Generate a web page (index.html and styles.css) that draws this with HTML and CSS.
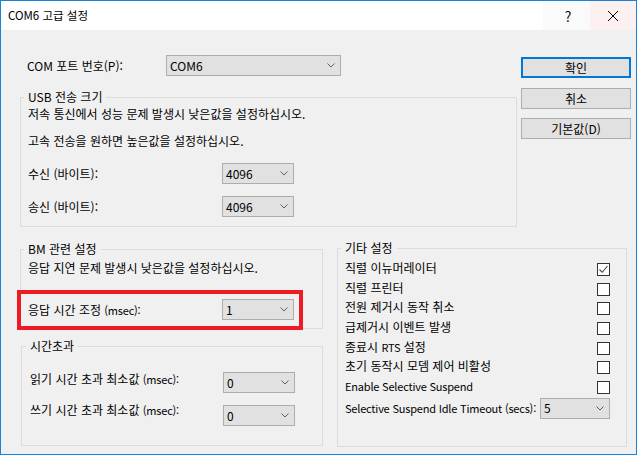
FILE: index.html
```html
<!DOCTYPE html>
<html lang="ko">
<head>
    <meta charset="UTF-8">
    <title>COM6 고급 설정</title>
    <link rel="stylesheet" href="styles.css">
</head>
<body>
    <div class="dialog">
        <div class="titlebar">
            <span class="title">COM6 고급 설정</span>
            <span class="tb-btn help">?</span>
            <span class="tb-btn close">
                <svg width="12" height="12" viewBox="0 0 12 12"><path d="M1 1 L11 11 M11 1 L1 11" stroke="#000" stroke-width="1" fill="none"/></svg>
            </span>
        </div>

        <div class="client">
            <div class="top">
                <div class="main">
                    <div class="row com-row">
                        <span class="label com-label">COM 포트 번호(P):</span>
                        <div class="combo combo-com"><span>COM6</span><svg class="chev" width="8" height="5" viewBox="0 0 8 5"><path d="M0.5 0.5 L4 4 L7.5 0.5" stroke="#606060" fill="none"/></svg></div>
                    </div>

                    <fieldset class="group usb">
                        <legend>USB 전송 크기</legend>
                        <p class="note first">저속 통신에서 성능 문제 발생시 낮은값을 설정하십시오.</p>
                        <p class="note second">고속 전송을 원하면 높은값을 설정하십시오.</p>
                        <div class="row r-recv">
                            <span class="label w194">수신 (바이트):</span>
                            <div class="combo combo-sm"><span>4096</span><svg class="chev" width="8" height="5" viewBox="0 0 8 5"><path d="M0.5 0.5 L4 4 L7.5 0.5" stroke="#606060" fill="none"/></svg></div>
                        </div>
                        <div class="row r-send">
                            <span class="label w194">송신 (바이트):</span>
                            <div class="combo combo-sm"><span>4096</span><svg class="chev" width="8" height="5" viewBox="0 0 8 5"><path d="M0.5 0.5 L4 4 L7.5 0.5" stroke="#606060" fill="none"/></svg></div>
                        </div>
                    </fieldset>
                </div>

                <div class="buttons">
                    <div class="btn default">확인</div>
                    <div class="btn">취소</div>
                    <div class="btn">기본값(D)</div>
                </div>
            </div>

            <div class="bottom">
                <div class="left-col">
                    <fieldset class="group bm">
                        <legend>BM 관련 설정</legend>
                        <p class="note">응답 지연 문제 발생시 낮은값을 설정하십시오.</p>
                        <div class="row r-latency">
                            <span class="label w194">응답 시간 조정 <span class="en">(msec):</span></span>
                            <div class="combo combo-sm"><span>1</span><svg class="chev" width="8" height="5" viewBox="0 0 8 5"><path d="M0.5 0.5 L4 4 L7.5 0.5" stroke="#606060" fill="none"/></svg></div>
                            <div class="highlight"></div>
                        </div>
                    </fieldset>

                    <fieldset class="group timeout">
                        <legend>시간초과</legend>
                        <div class="row r-read">
                            <span class="label w193">읽기 시간 초과 최소값 <span class="en">(msec):</span></span>
                            <div class="combo combo-sm"><span>0</span><svg class="chev" width="8" height="5" viewBox="0 0 8 5"><path d="M0.5 0.5 L4 4 L7.5 0.5" stroke="#606060" fill="none"/></svg></div>
                        </div>
                        <div class="row r-write">
                            <span class="label w193 lift">쓰기 시간 초과 최소값 <span class="en">(msec):</span></span>
                            <div class="combo combo-sm"><span>0</span><svg class="chev" width="8" height="5" viewBox="0 0 8 5"><path d="M0.5 0.5 L4 4 L7.5 0.5" stroke="#606060" fill="none"/></svg></div>
                        </div>
                    </fieldset>
                </div>

                <fieldset class="group misc">
                    <legend>기타 설정</legend>
                    <div class="check-row first"><span>직렬 이뉴머레이터</span><span class="box"><svg width="11" height="11" viewBox="0 0 11 11"><path d="M1.5 5.5 L4.2 8.3 L9.5 2" stroke="#444" stroke-width="1.1" fill="none"/></svg></span></div>
                    <div class="check-row"><span>직렬 프린터</span><span class="box"></span></div>
                    <div class="check-row"><span>전원 제거시 동작 취소</span><span class="box"></span></div>
                    <div class="check-row"><span>급제거시 이벤트 발생</span><span class="box"></span></div>
                    <div class="check-row"><span>종료시 <span class="en">RTS</span> 설정</span><span class="box"></span></div>
                    <div class="check-row"><span>초기 동작시 모뎀 제어 비활성</span><span class="box"></span></div>
                    <div class="check-row"><span class="en">Enable Selective Suspend</span><span class="box"></span></div>
                    <div class="row r-idle">
                        <span class="label w195 en">Selective Suspend Idle Timeout (secs):</span>
                        <div class="combo combo-idle"><span>5</span><svg class="chev" width="8" height="5" viewBox="0 0 8 5"><path d="M0.5 0.5 L4 4 L7.5 0.5" stroke="#606060" fill="none"/></svg></div>
                    </div>
                </fieldset>
            </div>
        </div>
    </div>
</body>
</html>
```

FILE: styles.css
```css
body {
    margin: 0;
    font-family: "Noto Sans CJK KR", sans-serif;
    font-size: 12px;
    color: #000;
    background: #fff;
}
.en {
    font-size: 11px;
    letter-spacing: -0.2px;
}
.dialog {
    width: 637px;
    height: 455px;
    box-sizing: border-box;
    border: 1px solid #1883d7;
    display: flex;
    flex-direction: column;
}
.titlebar {
    height: 29px;
    background: #fff;
    display: flex;
    align-items: stretch;
    flex-shrink: 0;
}
.title {
    flex: 1;
    padding-left: 7px;
    line-height: 29px;
    font-size: 11.5px;
}
.tb-btn {
    display: flex;
    align-items: center;
    justify-content: center;
}
.help {
    width: 47px;
    background: #fafafa;
    font-size: 14px;
    padding-left: 3px;
    box-sizing: border-box;
}
.close {
    width: 46px;
    background: #fdf0f0;
}
.client {
    flex: 1;
    background: #f0f0f0;
    padding-left: 19px;
}
.top {
    display: flex;
    align-items: flex-start;
}
.main {
    width: 497px;
}
.row {
    display: flex;
    align-items: center;
    height: 21px;
    position: relative;
}
.label {
    line-height: 16px;
    white-space: nowrap;
    flex-shrink: 0;
}
.com-row {
    margin-top: 25px;
    padding-left: 7px;
}
.com-label { width: 139px; }
.w194 { width: 194px; }
.w193 { width: 193px; }
.w195 { width: 195px; }
.combo {
    box-sizing: border-box;
    height: 21px;
    border: 1px solid #adadad;
    background: #e1e1e1;
    display: flex;
    align-items: center;
    justify-content: space-between;
    padding: 0 5px 0 3px;
    line-height: 16px;
}
.combo-com { width: 175px; }
.combo-sm { width: 72px; }
.combo-idle { width: 73px; }
.chev { display: block; }

.group {
    margin: 0;
    border: 1px solid #dcdcdc;
    padding: 0 7px;
    box-sizing: border-box;
    min-width: 0;
}
.group legend {
    padding: 0 4px;
    margin-left: -4px;
    line-height: 14px;
}
.note {
    margin: 0;
    line-height: 16px;
    white-space: nowrap;
}
.usb {
    margin-top: 14px;
    width: 497px;
    padding-bottom: 9px;
}
.usb .first { margin-top: 2px; }
.usb .second { margin-top: 11px; }
.r-recv { margin-top: 14px; }
.r-send { margin-top: 12px; }

.buttons {
    margin-left: 4px;
    padding-top: 27px;
    display: flex;
    flex-direction: column;
    gap: 9.5px;
}
.btn {
    width: 110px;
    height: 21px;
    box-sizing: border-box;
    border: 1px solid #adadad;
    background: #e1e1e1;
    text-align: center;
    line-height: 19px;
}
.btn.default {
    border: 2px solid #0078d7;
    line-height: 17px;
}

.bottom {
    display: flex;
    align-items: flex-start;
}
.left-col {
    width: 303px;
    margin-top: 15px;
}
.bm {
    width: 303px;
    padding-bottom: 8px;
}
.bm .note { margin-top: 4px; }
.r-latency { margin-top: 23px; }
.highlight {
    position: absolute;
    left: -11px;
    top: -9px;
    width: 286px;
    height: 40px;
    box-sizing: border-box;
    border: 4px solid #ed1c24;
}
.timeout {
    margin-top: 10px;
    margin-left: 1px;
    width: 302px;
    padding-left: 8px;
    padding-bottom: 19px;
}
.timeout .row { align-items: flex-start; }
.timeout .label { margin-top: -1px; }
.timeout .label.lift { margin-top: -3px; }
.r-read { margin-top: 19px; }
.r-write { margin-top: 12px; }

.misc {
    margin-top: 14px;
    margin-left: 14px;
    width: 290px;
    padding-right: 16px;
    padding-bottom: 27px;
}
.check-row {
    height: 19.7px;
    display: flex;
    align-items: center;
    justify-content: space-between;
    line-height: 16px;
    white-space: nowrap;
}
.check-row.first { margin-top: 3px; }
.box {
    width: 13px;
    height: 13px;
    box-sizing: border-box;
    border: 1px solid #333;
    background: #fff;
    margin-top: 3px;
    display: flex;
    align-items: center;
    justify-content: center;
}
.r-idle { margin-top: 2px; }
```
